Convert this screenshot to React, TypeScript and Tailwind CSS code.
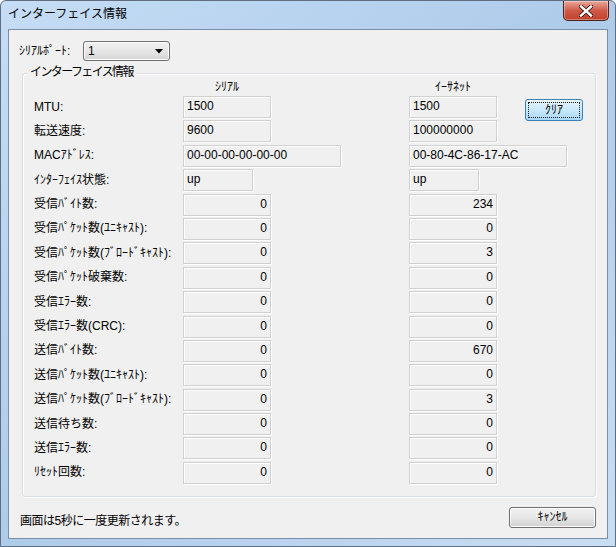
import React from 'react';

const font = { fontFamily: '"Liberation Sans", "Noto Sans CJK JP", sans-serif' };

type Row = {
  label: string;
  serial: string;
  ether: string;
  kind: 'text' | 'mac' | 'state' | 'num';
};

const rows: Row[] = [
  { label: 'MTU:', serial: '1500', ether: '1500', kind: 'text' },
  { label: '転送速度:', serial: '9600', ether: '100000000', kind: 'text' },
  { label: 'MACｱﾄﾞﾚｽ:', serial: '00-00-00-00-00-00', ether: '00-80-4C-86-17-AC', kind: 'mac' },
  { label: 'ｲﾝﾀｰﾌｪｲｽ状態:', serial: 'up', ether: 'up', kind: 'state' },
  { label: '受信ﾊﾞｲﾄ数:', serial: '0', ether: '234', kind: 'num' },
  { label: '受信ﾊﾟｹｯﾄ数(ﾕﾆｷｬｽﾄ):', serial: '0', ether: '0', kind: 'num' },
  { label: '受信ﾊﾟｹｯﾄ数(ﾌﾞﾛｰﾄﾞｷｬｽﾄ):', serial: '0', ether: '3', kind: 'num' },
  { label: '受信ﾊﾟｹｯﾄ破棄数:', serial: '0', ether: '0', kind: 'num' },
  { label: '受信ｴﾗｰ数:', serial: '0', ether: '0', kind: 'num' },
  { label: '受信ｴﾗｰ数(CRC):', serial: '0', ether: '0', kind: 'num' },
  { label: '送信ﾊﾞｲﾄ数:', serial: '0', ether: '670', kind: 'num' },
  { label: '送信ﾊﾟｹｯﾄ数(ﾕﾆｷｬｽﾄ):', serial: '0', ether: '0', kind: 'num' },
  { label: '送信ﾊﾟｹｯﾄ数(ﾌﾞﾛｰﾄﾞｷｬｽﾄ):', serial: '0', ether: '3', kind: 'num' },
  { label: '送信待ち数:', serial: '0', ether: '0', kind: 'num' },
  { label: '送信ｴﾗｰ数:', serial: '0', ether: '0', kind: 'num' },
  { label: 'ﾘｾｯﾄ回数:', serial: '0', ether: '0', kind: 'num' },
];

function Field({ value, kind }: { value: string; kind: Row['kind'] }) {
  const width =
    kind === 'mac' ? 'w-[158px]' : kind === 'state' ? 'w-[70px]' : 'w-[88px]';
  return (
    <div
      className={`${width} h-[22px] border border-[#d0d0d0] bg-[#f0f0f0] shadow-[inset_1px_1px_0_#ffffff,1px_1px_0_#ffffff] pt-[2px] px-[3px] text-[12px] leading-[15px] text-black ${
        kind === 'num' ? 'text-right' : 'text-left'
      }`}
    >
      {value}
    </div>
  );
}

function CloseButton() {
  return (
    <div className="w-[46px] h-[20px] rounded-b-[5px] border border-t-0 border-[#4b1f1a] bg-gradient-to-b from-[#e9a99c] via-[#cf5a47] to-[#c0402c] flex items-center justify-center shadow-[inset_0_0_0_1px_rgba(255,255,255,0.35)]">
      <svg width="14" height="12" viewBox="0 0 14 12">
        <path d="M2 1.5 L12 10.5 M12 1.5 L2 10.5" stroke="#3a1a16" strokeWidth="4.2" strokeLinecap="square" />
        <path d="M2 1.5 L12 10.5 M12 1.5 L2 10.5" stroke="#ffffff" strokeWidth="2.4" strokeLinecap="square" />
      </svg>
    </div>
  );
}

export default function App() {
  return (
    <div
      className="w-[616px] h-[547px] flex flex-col rounded-t-[6px] border border-[#5f6e80] bg-gradient-to-br from-[#c5ddf5] via-[#aecbea] to-[#c8def4] overflow-hidden"
      style={font}
    >
      {/* title bar */}
      <div className="h-[28px] flex items-start justify-between pl-[7px] pr-[6px]">
        <div className="pt-[6px] text-[12px] leading-[15px] text-black">インターフェイス情報</div>
        <CloseButton />
      </div>

      {/* client area */}
      <div className="flex-1 mx-[7px] mb-[7px] border border-[#7c8ea5] bg-[#f0f0f0] flex flex-col px-[10px] pt-[11px] pb-[9px]">
        <div className="flex items-center h-[20px]">
          <span className="text-[12px] leading-[15px] text-black w-[64px]">ｼﾘｱﾙﾎﾟｰﾄ:</span>
          <div className="w-[87px] h-[20px] rounded-[3px] border border-[#707070] bg-gradient-to-b from-[#f2f2f2] via-[#e6e6e6] to-[#d4d4d4] flex items-center justify-between pl-[4px] pr-[6px] shadow-[inset_0_0_0_1px_#fcfcfc]">
            <span className="text-[12px] leading-[15px] text-black">1</span>
            <svg width="8" height="5" viewBox="0 0 8 5">
              <path d="M0 0 H8 L4 4.5 Z" fill="#000000" />
            </svg>
          </div>
        </div>

        {/* group box */}
        <div className="relative mt-[12px] ml-[3px] w-[574px] h-[424px] rounded-[3px] border border-[#d5dfe5] shadow-[inset_1px_1px_0_#ffffff,1px_1px_0_#ffffff] pl-[11px] pt-[5px]">
          <span className="absolute left-[4px] top-[-9px] bg-[#f0f0f0] px-[3px] text-[12px] leading-[15px] tracking-[-1.6px] text-black">
            インターフェイス情報
          </span>

          <div className="flex h-[17px] items-center text-[12px] leading-[15px] text-black">
            <div className="w-[149px]" />
            <div className="w-[226px]">
              <div className="w-[88px] text-center">ｼﾘｱﾙ</div>
            </div>
            <div className="w-[88px] text-center">ｲｰｻﾈｯﾄ</div>
          </div>

          <div className="flex flex-col gap-[2.4px]">
            {rows.map((r, i) => (
              <div key={r.label} className="flex items-start h-[22px]">
                <div className="w-[149px] h-[22px] flex items-center text-[12px] leading-[15px] text-black">
                  {r.label}
                </div>
                <div className="w-[226px]">
                  <Field value={r.serial} kind={r.kind} />
                </div>
                <Field value={r.ether} kind={r.kind} />
                {i === 0 && (
                  <button className="ml-[28px] mt-[3px] w-[58px] h-[22px] rounded-[3px] border border-[#3c7fb1] bg-gradient-to-b from-[#e8f5fc] via-[#c9e8fb] to-[#a8d8f5] p-[2px] text-[12px] leading-[14px] text-black">
                    <div className="w-full h-full border border-dotted border-[#1a1a1a] flex items-center justify-center">
                      ｸﾘｱ
                    </div>
                  </button>
                )}
              </div>
            ))}
          </div>
        </div>

        {/* footer */}
        <div className="mt-auto flex items-center justify-between">
          <span className="ml-[1px] mt-[8px] text-[12px] leading-[15px] tracking-[-0.5px] text-black">
            画面は5秒に一度更新されます。
          </span>
          <button className="mr-[1px] w-[87px] h-[21px] rounded-[3px] border border-[#707070] bg-gradient-to-b from-[#f2f2f2] via-[#e6e6e6] to-[#d2d2d2] shadow-[inset_0_0_0_1px_#fcfcfc] text-[12px] leading-[15px] text-black">
            ｷｬﾝｾﾙ
          </button>
        </div>
      </div>
    </div>
  );
}
